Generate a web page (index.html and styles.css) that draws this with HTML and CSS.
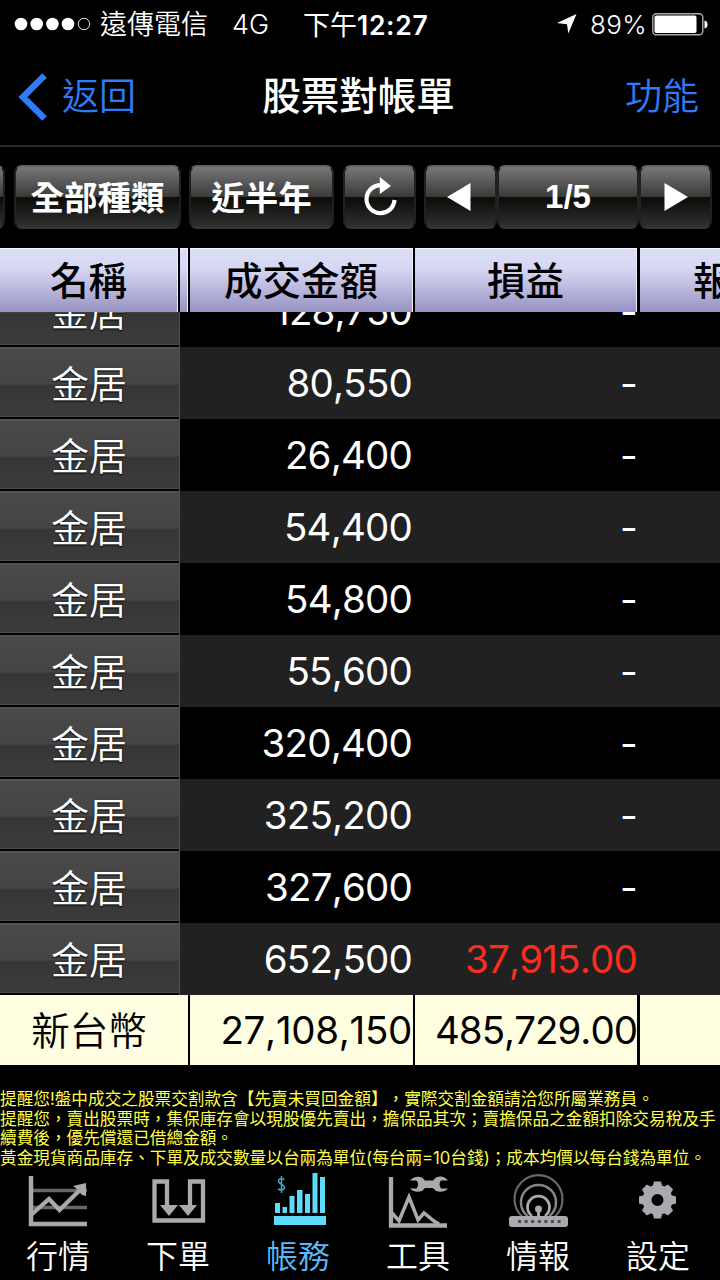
FILE: index.html
```html
<!DOCTYPE html>
<html lang="zh-TW">
<head>
<meta charset="utf-8">
<title>股票對帳單</title>
<link rel="stylesheet" href="styles.css">
</head>
<body>
<div class="screen">
  <div class="status">
    <svg class="signal" width="78" height="14" viewBox="0 0 78 14"><g fill="#fff"><circle cx="7" cy="7" r="6.3"/><circle cx="22.7" cy="7" r="6.3"/><circle cx="38.4" cy="7" r="6.3"/><circle cx="54" cy="7" r="6.3"/></g><circle cx="70" cy="7" r="5.7" fill="none" stroke="#ddd" stroke-width="1"/></svg>
    <span class="carrier">遠傳電信</span>
    <span class="network">4G</span>
    <span class="time">下午<b>12:27</b></span>
    <svg class="location" width="22" height="22" viewBox="0 0 22 22"><path d="M20.500 1 12.300 20.500 11 11.200 1 10Z" fill="#fff"/></svg>
    <span class="percent">89%</span>
    <svg class="battery" width="57" height="23" viewBox="0 0 57 23"><rect x=".8" y=".8" width="50" height="21" rx="3.5" fill="none" stroke="#aaa" stroke-width="1.4"/><rect x="2.5" y="2.6" width="42" height="17.4" rx="1.8" fill="#fff"/><path d="M52.5 7.5q3 .5 3 4t-3 4Z" fill="#fff"/></svg>
  </div>

  <div class="navbar">
    <div class="back"><svg width="30" height="48" viewBox="0 0 30 48"><path d="M27.500 2.500 6 24l21.500 21.500" fill="none" stroke="#2f7cf8" stroke-width="6.500"/></svg><span>返回</span></div>
    <div class="title">股票對帳單</div>
    <div class="action">功能</div>
  </div>

  <div class="toolbar">
    <div class="btn edge"></div>
    <div class="btn kind">全部種類</div>
    <div class="btn range">近半年</div>
    <div class="btn reload"><svg width="38" height="44" viewBox="0 0 38 44"><path d="M20.500 10.200A14 14 0 1 0 33.500 25" fill="none" stroke="#fff" stroke-width="4.200"/><path d="M18.800 2v17L30 11Z" fill="#fff"/></svg></div>
    <div class="btn prev"><svg width="24" height="28" viewBox="0 0 24 28"><path d="M23.500 0v28L0 14Z" fill="#fff"/></svg></div>
    <div class="btn page">1/5</div>
    <div class="btn next"><svg width="24" height="28" viewBox="0 0 24 28"><path d="M.5 0v28L24 14Z" fill="#fff"/></svg></div>
  </div>

  <div class="table">
    <div class="head">
      <div class="cell h-name">名稱</div><div class="cell h-gap"></div><div class="cell">成交金額</div><div class="cell">損益</div><div class="cell h-report">報</div>
    </div>
    <div class="body">
      <div class="row"><div class="name">金居</div><div class="num">128,750</div><div class="num">-</div></div>
      <div class="row alt"><div class="name">金居</div><div class="num">80,550</div><div class="num">-</div></div>
      <div class="row"><div class="name">金居</div><div class="num">26,400</div><div class="num">-</div></div>
      <div class="row alt"><div class="name">金居</div><div class="num">54,400</div><div class="num">-</div></div>
      <div class="row"><div class="name">金居</div><div class="num">54,800</div><div class="num">-</div></div>
      <div class="row alt"><div class="name">金居</div><div class="num">55,600</div><div class="num">-</div></div>
      <div class="row"><div class="name">金居</div><div class="num">320,400</div><div class="num">-</div></div>
      <div class="row alt"><div class="name">金居</div><div class="num">325,200</div><div class="num">-</div></div>
      <div class="row"><div class="name">金居</div><div class="num">327,600</div><div class="num">-</div></div>
      <div class="row alt"><div class="name">金居</div><div class="num">652,500</div><div class="num gain">37,915.00</div></div>
    </div>
    <div class="foot">
      <div class="cell f-name">新台幣</div><div class="cell num f-amount">27,108,150</div><div class="cell num f-profit">485,729.00</div><div class="cell"></div>
    </div>
  </div>

  <div class="notes">
    <p>提醒您!盤中成交之股票交割款含【先賣未買回金額】，實際交割金額請洽您所屬業務員。</p>
    <p>提醒您，賣出股票時，集保庫存會以現股優先賣出，擔保品其次；賣擔保品之金額扣除交易稅及手</p>
    <p>續費後，優先償還已借總金額。</p>
    <p>黃金現貨商品庫存、下單及成交數量以台兩為單位(每台兩=10台錢)；成本均價以每台錢為單位。</p>
  </div>

  <div class="tabs">
    <div class="tab"><svg width="60" height="54" viewBox="0 0 60 54"><g fill="none" stroke="#66666a" stroke-width="3.600"><path d="M3 18.500H59M3 35.500H59"/></g><g fill="none" stroke="#aaaaae"><path d="M3 4v48h56" stroke-width="4.500"/><path d="M3 43 21 27l10.500 11L54 16" stroke-width="4.200"/></g><path d="M45 14 58 11v13l-4-1-5-6Z" fill="#aaaaae"/></svg><span>行情</span></div>
    <div class="tab"><svg width="60" height="54" viewBox="0 0 60 54"><path d="M19 38V9.500H6.500v39H55V9.500H42v28.500" fill="none" stroke="#aaaaae" stroke-width="4.300"/><path d="M12 33h18l-9 11ZM31 33h18l-9 11Z" fill="#aaaaae"/></svg><span>下單</span></div>
    <div class="tab active"><svg width="60" height="54" viewBox="0 0 60 54"><path d="M6 44h52v9H6ZM7 31h5v10H7ZM14.500 35h4.500v6h-4.500ZM21.500 24h5v17h-5ZM29 18h5.500v23H29ZM37 22h5v19h-5ZM44.500 1h5v40h-5ZM52 5h5v36h-5Z" fill="#5edbf8"/><path d="M16.500 7.500q-6-2-6 1.800c0 2.500 6 3 6 6.200 0 3-4.500 2.500-6.500 1.500M13.500 4v17" fill="none" stroke="#42a8c4" stroke-width="1.500"/></svg><span>帳務</span></div>
    <div class="tab"><svg width="60" height="54" viewBox="0 0 60 54"><path d="M3 5v48.500h56" fill="none" stroke="#aaaaae" stroke-width="4.300"/><path d="m4 41 7 8 10-24 9 23 6-7 10 8 5 3" fill="none" stroke="#aaaaae" stroke-width="3.500"/><path d="M22 8.500Q27 3 34 5.500l3 3h8l3-3q7-3 12 3h-7q-3 3.500 0 8h7q-5 5-12 2.500l-3-3h-8l-3 3q-7 2.500-12-2.500h6.500q3-4 0-8Z" fill="#aaaaae"/></svg><span>工具</span></div>
    <div class="tab"><svg width="60" height="54" viewBox="0 0 60 54"><g fill="none"><path d="M14.500 45a24 24 0 1 1 32 0" stroke="#68686a" stroke-width="2.200"/><path d="M19.500 44a17.500 17.500 0 1 1 22 0" stroke="#858588" stroke-width="2.500"/><path d="M24 44a11 11 0 1 1 13 0" stroke="#aaaaae" stroke-width="2.700"/></g><circle cx="30.500" cy="37" r="3.500" fill="#aaaaae"/><path d="M29 37h3v10h-3Z" fill="#aaaaae"/><rect x="1" y="44" width="59" height="11" rx="3" fill="#aaaaae"/><path d="M10 49.500h43" stroke="#4c4c50" stroke-width="3" stroke-dasharray="3 3.600"/></svg><span>情報</span></div>
    <div class="tab"><svg width="60" height="54" viewBox="0 0 60 54"><g fill="#aaaaae" transform="translate(29.500 28)"><path id="tooth" d="M-5.500-11-3.500-18.500h7l2 7.500Z"/><use href="#tooth" transform="rotate(45)"/><use href="#tooth" transform="rotate(90)"/><use href="#tooth" transform="rotate(135)"/><use href="#tooth" transform="rotate(180)"/><use href="#tooth" transform="rotate(225)"/><use href="#tooth" transform="rotate(270)"/><use href="#tooth" transform="rotate(315)"/></g><circle cx="29.500" cy="28" r="10.500" fill="none" stroke="#aaaaae" stroke-width="9"/></svg><span>設定</span></div>
  </div>
</div>
</body>
</html>
```
FILE: styles.css
```css
* { box-sizing: border-box; }
body { margin: 0; background: #000; }
.screen {
  width: 720px; height: 1280px; overflow: hidden;
  display: flex; flex-direction: column;
  background: #000; color: #fff;
  font-family: Inter, "Noto Sans CJK TC", sans-serif;
  font-weight: 400;
  white-space: nowrap;
}
svg { display: block; flex: none; overflow: visible; }

.status { height: 48px; display: flex; align-items: center; padding-left: 14px; font-size: 27px; line-height: 48px; }
.status span { padding-top: 2px; }
.carrier { margin-left: 8px; width: 132px; font-weight: 350; }
.network { width: 71px; font-weight: 300; }
.time { width: 253px; }
.time b { font-weight: 600; font-size: 26.5px; letter-spacing: .7px; }
.location { width: 22px; }
.percent { margin-left: 12px; width: 62px; font-size: 26px; font-weight: 300; letter-spacing: .3px; }

.navbar { height: 99px; flex: none; display: grid; grid-template-columns: 200px 1fr 200px; align-items: center; border-bottom: 2px solid #292929; font-size: 37px; line-height: 97px; }
.back { display: flex; align-items: center; gap: 15px; padding-left: 17px; color: #2f7cf8; font-weight: 350; }
.title { text-align: center; font-weight: 500; font-size: 38.5px; padding-right: 3px; }
.action { text-align: right; color: #2f7cf8; padding-right: 21px; font-weight: 350; }

.toolbar { height: 101px; flex: none; display: flex; padding-top: 18px; font-size: 33.5px; font-weight: 700; }
.btn {
  height: 64px; display: flex; align-items: center; justify-content: center;
  border: 2px solid #202020; border-top-color: #626262; border-bottom-color: #353535; border-radius: 8px;
  background: linear-gradient(#777 0%, #3b3b3b 49%, #0c0d09 51%, #10100d 58%, #303030 100%);
}
.edge { width: 16px; margin: 0 9px 0 -11px; }
.kind { width: 167px; margin-right: 8px; padding-bottom: 3px; }
.range { width: 145px; margin-right: 9px; padding-bottom: 3px; }
.reload { width: 73px; margin-right: 8px; }
.prev { width: 73px; padding-right: 4px; }
.page { width: 142px; font-family: "Liberation Sans", sans-serif; font-size: 33px; }
.next { width: 73px; }

.head, .foot { display: grid; position: relative; z-index: 1; background: #000; }
.head { height: 64px; grid-template-columns: 178px 8px 223px 222px 81px; column-gap: 2px; font-size: 38.5px; font-weight: 500; line-height: 63px; color: #000; }
.head .cell { height: 64px; padding-top: 1px; text-align: center; border-top: 1px solid #f4f4ff; border-right: 1px solid #eeeeff; background: linear-gradient(#dddff8, #d6d8f3 30%, #b9b6dc 65%, #9692c2); }
.head .h-report { text-align: left; padding-left: 53px; margin-left: 1px; overflow: hidden; border-right: 0; }
.body { height: 683px; overflow: hidden; display: flex; flex-direction: column; justify-content: flex-end; }
.row { height: 72px; flex: none; display: grid; grid-template-columns: 180px 233px 225px 1fr; line-height: 72px; }
.row.alt { background: #212121; }
.name { height: 72px; text-align: center; padding-right: 1px; font-size: 38px; font-weight: 350; line-height: 74px; background: linear-gradient(#555 0 1px, #494949 2px, #454545 37px, #373737 38px, #3b3b3b 69px, #4a4a4a 69px 70px, #000 70px); border-right: 1px solid #505050; text-shadow: 0 1px 2px #000; }
.num { text-align: right; font-size: 38.5px; font-weight: 400; font-kerning: none; font-feature-settings: "calt" 0; letter-spacing: -.8px; padding-right: 1px; }
.gain { color: #fa2d20; }
.foot { height: 70px; grid-template-columns: 188px 223px 222px 81px; column-gap: 2px; color: #000; line-height: 71px; }
.foot .cell { height: 70px; background: #fffee1; }
.foot .cell:last-child { margin-left: 1px; }
.foot .f-amount { letter-spacing: -.3px; }
.foot .f-profit { letter-spacing: -1px; padding-right: 0; }
.f-name { text-align: center; font-size: 38.5px; font-weight: 350; line-height: 73px; padding-right: 10px; }

.notes { height: 107px; flex: none; padding-top: 25px; color: #ffff4c; font-size: 16.65px; line-height: 19.5px; text-spacing-trim: space-all; }
.notes p { margin: 0; height: 19.5px; }

.tabs { display: flex; margin-left: -2px; }
.tab { width: 120px; flex: none; display: flex; flex-direction: column; align-items: center; font-size: 32px; font-weight: 350; line-height: 46px; }
.tab span { margin-top: 8px; }
.tab.active { color: #5cb9f9; }
```
